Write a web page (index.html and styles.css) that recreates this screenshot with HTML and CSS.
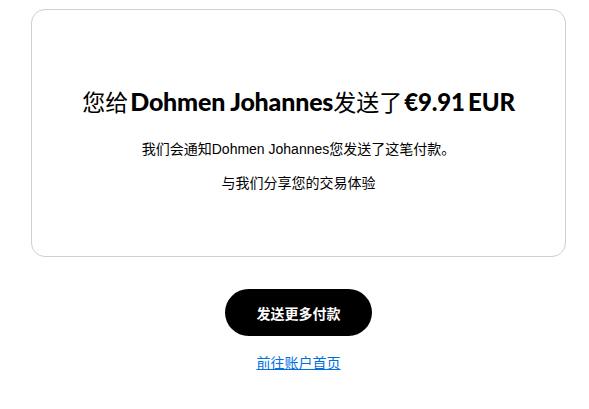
FILE: index.html
```html
<!DOCTYPE html>
<html lang="zh-CN">
<head>
<meta charset="utf-8">
<link rel="stylesheet" href="styles.css">
</head>
<body>
<main class="page">
  <section class="card">
    <h1 class="title">您给<span class="latin name">Dohmen Johannes</span>发送了<span class="latin amount">€9.91 EUR</span></h1>
    <p class="note">我们会通知Dohmen Johannes您发送了这笔付款。</p>
    <p class="note">与我们分享您的交易体验</p>
  </section>
  <div class="actions">
    <button class="btn" type="button">发送更多付款</button>
    <a class="link" href="#">前往账户首页</a>
  </div>
</main>
</body>
</html>
```

FILE: styles.css
```css
html, body {
  margin: 0;
  padding: 0;
  background: #fff;
}
body {
  font-family: "Liberation Sans", "Noto Sans CJK SC", sans-serif;
  color: #000;
}
.page {
  padding: 9px 23px 0 31px;
  display: flex;
  flex-direction: column;
}
.card {
  box-sizing: border-box;
  height: 248px;
  border: 1px solid #cfcfcf;
  border-radius: 14px;
  display: flex;
  flex-direction: column;
  align-items: center;
  padding-top: 75px;
}
.title {
  margin: 0 0 21px;
  font-size: 23px;
  font-weight: 400;
  line-height: 32px;
  font-family: "Noto Sans CJK SC", sans-serif;
}
.title .latin {
  font-family: "Lato", "Noto Sans CJK SC", sans-serif;
  font-weight: 900;
  font-size: 24px;
  letter-spacing: -0.2px;
}
.title .name {
  font-size: 25px;
  margin-left: 2px;
}
.title .amount {
  margin-left: 2px;
  word-spacing: -2px;
}
.note {
  margin: 0 0 14px;
  font-size: 14px;
  line-height: 20px;
}
.actions {
  display: flex;
  flex-direction: column;
  align-items: center;
  padding-top: 32px;
}
.btn {
  width: 147px;
  height: 47px;
  border: none;
  border-radius: 24px;
  background: #000;
  color: #fff;
  font-family: "Noto Sans CJK SC", sans-serif;
  font-size: 14px;
  font-weight: 700;
  cursor: pointer;
}
.link {
  margin-top: 17px;
  font-size: 14px;
  line-height: 20px;
  color: #0070e0;
  text-decoration: underline;
}
```
